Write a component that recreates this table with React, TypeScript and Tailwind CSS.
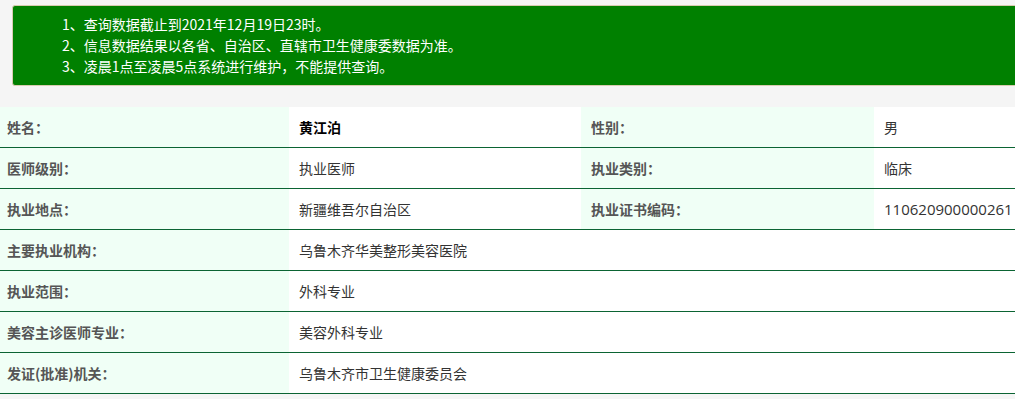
const notes = [
  "1、查询数据截止到2021年12月19日23时。",
  "2、信息数据结果以各省、自治区、直辖市卫生健康委数据为准。",
  "3、凌晨1点至凌晨5点系统进行维护，不能提供查询。",
];

const wideRows = [
  ["主要执业机构：", "乌鲁木齐华美整形美容医院"],
  ["执业范围：", "外科专业"],
  ["美容主诊医师专业：", "美容外科专业"],
  ["发证(批准)机关：", "乌鲁木齐市卫生健康委员会"],
];

const pairRows = [
  ["姓名：", "黄江泊", "性别：", "男"],
  ["医师级别：", "执业医师", "执业类别：", "临床"],
  ["执业地点：", "新疆维吾尔自治区", "执业证书编码：", "110620900000261"],
];

export default function App() {
  return (
    <div
      className="h-[399px] w-full overflow-hidden bg-[#f5f5f5] text-[14px]"
      style={{ fontFamily: '"Noto Sans CJK SC", "Noto Sans", sans-serif' }}
    >
      <div className="w-[1160px]">
        <div className="ml-3 mt-[5px] rounded-[3px] border border-[#d8cdb0] bg-[#008000] py-2 pl-[49px] text-white">
          {notes.map((n) => (
            <div key={n} className="leading-[21px]">
              {n}
            </div>
          ))}
        </div>

        <div className="mt-[21px] bg-white">
          {pairRows.map(([l1, v1, l2, v2], i) => (
            <div key={l1} className="flex h-[41px] border-b border-[#0b6433]">
              <div className="flex w-[289px] items-center bg-[#f0fff6] pl-[7px] font-bold text-[#555]">{l1}</div>
              <div className={`flex w-[292px] items-center pl-[10px] ${i === 0 ? "font-bold text-black" : "text-[#333]"}`}>{v1}</div>
              <div className="flex w-[293px] items-center bg-[#f0fff6] pl-[10px] font-bold text-[#555]">{l2}</div>
              <div
                className={`flex flex-1 items-center pl-[10px] text-[#333] ${i === 2 ? "font-['Open_Sans',sans-serif] text-[15px]" : ""}`}
              >
                {v2}
              </div>
            </div>
          ))}
          {wideRows.map(([l, v]) => (
            <div key={l} className="flex h-[41px] border-b border-[#0b6433]">
              <div className="flex w-[289px] items-center bg-[#f0fff6] pl-[7px] font-bold text-[#555]">{l}</div>
              <div className="flex flex-1 items-center pl-[10px] text-[#333]">{v}</div>
            </div>
          ))}
        </div>
      </div>
    </div>
  );
}
